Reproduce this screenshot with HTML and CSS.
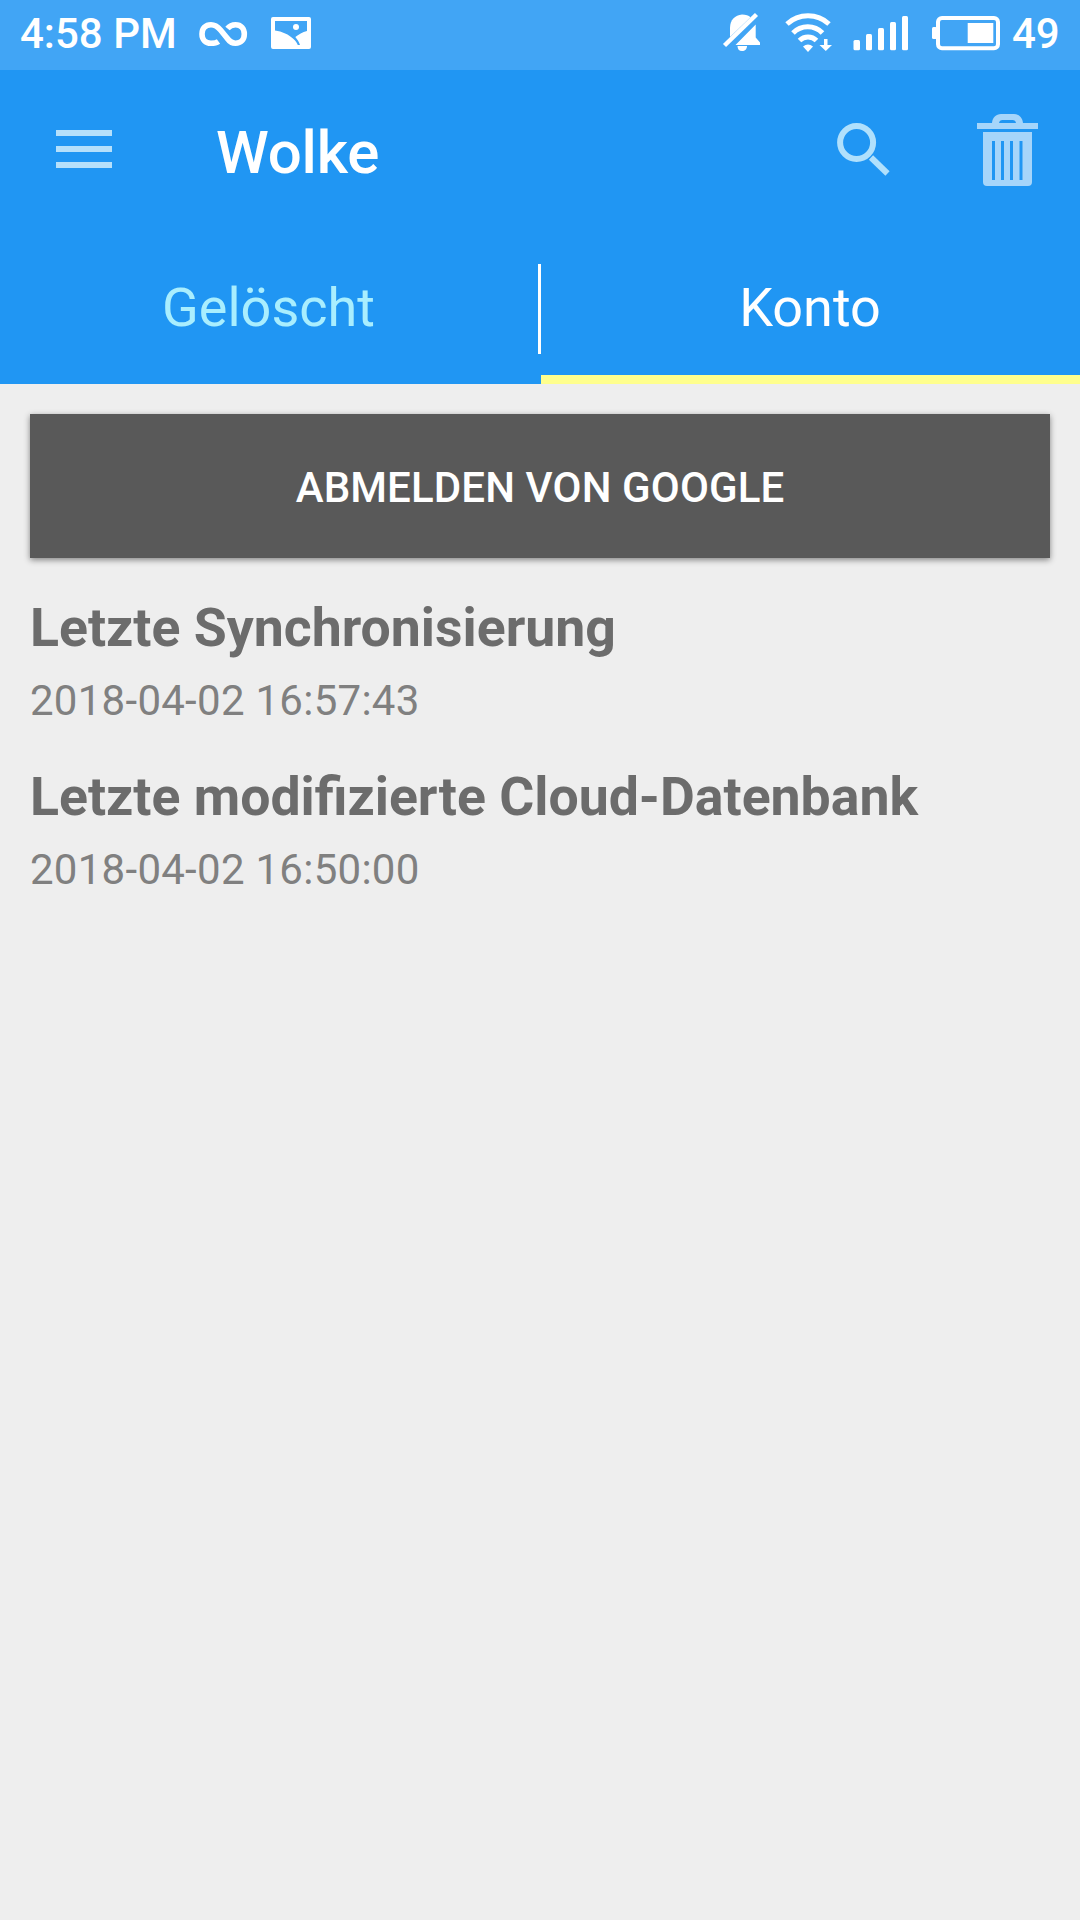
FILE: index.html
```html
<!DOCTYPE html>
<html lang="de">
<head>
	<meta charset="utf-8">
	<title>Wolke</title>
	<link rel="stylesheet" href="styles.css">
</head>
<body>
	<div class="status-bar">
		<span class="clock">4:58 PM</span>
		<svg class="icon-infinity" width="50" height="70" viewBox="198 0 50 70">
			<path d="M218.500 41.500C216 43.300 213.500 43.300 211 43.300C205.500 43.300 202 39.500 202 34S205.500 24.700 211 24.700C215.500 24.700 218 27 220.500 30L227 38C229.500 41.500 232 43.300 235.500 43.300C241 43.300 244.300 39.500 244.300 34S241 24.700 235.500 24.700C232 24.700 229.500 26 227.500 28.500" />
		</svg>
		<svg class="icon-picture" width="40" height="70" viewBox="271 0 40 70">
			<path fill-rule="evenodd" d="M273 17H309Q311 17 311 19V47Q311 49 309 49H273Q271 49 271 47V19Q271 17 273 17ZM275 21V30.500C282 31.500 289 34.500 293.500 39C295.800 41 297 43 297.800 45H300C299 42 297.500 39.500 295.300 37C298.500 34.500 302.500 32 307 31V21Z" />
			<circle cx="296" cy="27" r="3" />
		</svg>
		<div class="status-right">
			<svg width="40" height="70" viewBox="722 0 40 70">
				<path d="M730 37V28C730 20 735 15 742 14.500C746 14.500 748.500 15.500 750.500 17.200Z" />
				<path d="M755.700 24.500V37.500L760 42.500V45H735.500Z" />
				<path d="M737.500 46H747C747 49 745 51 742 51S737.500 49 737.500 46Z" />
				<path class="slash" d="M724.500 45.500L756.500 14.500" />
			</svg>
			<svg class="icon-wifi" width="48" height="70" viewBox="785 0 48 70">
				<path class="arc" d="M787 24A31 31 0 0 1 829 24" />
				<path class="arc" d="M793 33A20.500 20.500 0 0 1 822.500 33" />
				<path class="arc" d="M799.500 40.500A12 12 0 0 1 816.500 40.500" />
				<path d="M803 46.500Q808 42.500 813 46.500L808 52Z" />
				<path d="M824 39H827.500V45H832L825.800 51L819.500 45H824Z" />
			</svg>
			<svg class="icon-signal" width="56" height="70" viewBox="853 0 56 70">
				<rect x="853.500" y="40" width="6.500" height="10.300" rx="1.500" />
				<rect x="866" y="34" width="6" height="16.300" rx="1.500" />
				<rect x="878" y="28" width="6" height="22.300" rx="1.500" />
				<rect x="890" y="22" width="6" height="28.300" rx="1.500" />
				<rect x="902" y="16" width="6" height="34.300" rx="1.500" />
			</svg>
			<svg class="icon-battery" width="70" height="70" viewBox="931 0 70 70">
				<rect class="shell" x="938" y="18" width="60" height="30.300" rx="4" />
				<rect x="932" y="27" width="5" height="12" rx="1.500" />
				<rect x="967.700" y="23" width="25.600" height="20" />
			</svg>
			<span class="battery-level">49</span>
		</div>
	</div>

	<div class="app-bar">
		<svg width="56" height="38" viewBox="0 0 56 38">
			<path d="M0 0H56V6H0ZM0 16H56V22H0ZM0 32H56V38H0Z" />
		</svg>
		<h1>Wolke</h1>
		<svg class="icon-search" width="54" height="54" viewBox="836 122 54 54">
			<circle cx="856.600" cy="142.500" r="16.500" />
			<path d="M871 157.500L887.500 173.500" />
		</svg>
		<svg class="icon-trash" width="61" height="72" viewBox="0 0 61 72">
			<path fill-rule="evenodd" d="M0 9H15C15.500 3.500 19 0 24 0H37C42 0 45.500 3.500 46 9H61V15H0ZM22 9H39Q38.500 6 35.500 6H25.500Q22.500 6 22 9Z" />
			<path fill-rule="evenodd" d="M6 18H55V68Q55 72 51 72H10Q6 72 6 68ZM15 27V66H18V27ZM24 27V66H27V27ZM33 27V66H36V27ZM42.500 27V66H45.500V27Z" />
		</svg>
	</div>

	<div class="tabs">
		<div class="tab">Gelöscht</div>
		<div class="divider"></div>
		<div class="tab active">Konto</div>
	</div>

	<div class="content">
		<button class="logout">ABMELDEN VON GOOGLE</button>
		<div class="entry">
			<h2>Letzte Synchronisierung</h2>
			<p>2018-04-02 16:57:43</p>
		</div>
		<div class="entry">
			<h2>Letzte modifizierte Cloud-Datenbank</h2>
			<p>2018-04-02 16:50:00</p>
		</div>
	</div>
</body>
</html>
```
FILE: styles.css
```css
* {
	box-sizing: border-box;
}
body {
	margin: 0;
	min-height: 1920px;
	background-color: #eeeeee;
	font-family: Roboto, sans-serif;
}
svg {
	display: block;
	flex: none;
}
h1, h2, p {
	margin: 0;
}

/* status bar */
.status-bar {
	display: flex;
	align-items: center;
	height: 70px;
	padding: 0 21px 0 20px;
	background-color: #41a5f5;
	color: #fff;
	font-size: 42px;
	font-weight: 500;
	line-height: 68px;
}
.status-bar svg {
	fill: #fff;
}
.clock {
	width: 178px;
	height: 70px;
	white-space: nowrap;
}
.status-bar .icon-infinity {
	fill: none;
	stroke: #fff;
	stroke-width: 5.6;
}
.icon-picture {
	margin-left: 23px;
}
.status-right {
	display: flex;
	margin-left: auto;
}
.slash {
	stroke: #fff;
	stroke-width: 4.5;
}
.icon-wifi {
	margin-left: 23px;
}
.arc {
	fill: none;
	stroke: #fff;
	stroke-width: 5;
}
.icon-signal {
	margin-left: 20px;
}
.icon-battery {
	margin-left: 22px;
}
.shell {
	fill: none;
	stroke: #fff;
	stroke-width: 4;
}
.battery-level {
	width: 47px;
	margin-left: 11px;
}

/* app bar */
.app-bar {
	display: flex;
	align-items: center;
	height: 164px;
	padding: 0 42px 6px 56px;
	background-color: #2096f3;
}
.app-bar svg {
	fill: #b5e0fb;
}
.app-bar h1 {
	flex: 1;
	margin-left: 104px;
	padding-top: 7px;
	color: #fff;
	font-size: 60px;
	font-weight: 500;
	letter-spacing: -0.2px;
	line-height: 70px;
}
.app-bar .icon-search {
	fill: none;
	stroke: #b0e0fc;
	stroke-width: 6;
}
.app-bar .icon-trash {
	margin: 2px 0 0 87px;
	fill: #a6d5fa;
}

/* tabs */
.tabs {
	display: grid;
	grid-template-columns: 538px 3px 1fr;
	align-items: center;
	height: 150px;
	background-color: #2096f3;
	font-size: 54px;
}
.tab {
	height: 150px;
	padding-right: 1px;
	line-height: 147px;
	text-align: center;
	color: #a9eefe;
}
.divider {
	height: 90px;
	background-color: #fff;
}
.tab.active {
	color: #fff;
	border-bottom: 9px solid #ffff8d;
}

/* account page */
.content {
	padding: 30px;
}
.logout {
	display: block;
	width: 100%;
	height: 144px;
	padding: 2px 0 0;
	border: none;
	background-color: #595959;
	box-shadow: 0 2px 6px rgba(0, 0, 0, 0.45);
	color: #fff;
	font-family: inherit;
	font-size: 42px;
	font-weight: 500;
	letter-spacing: 0.12px;
}
.entry {
	margin-top: 39px;
}
.logout + .entry {
	margin-top: 38px;
}
.entry h2 {
	color: #6c6c6c;
	font-size: 53.6px;
	font-weight: 700;
	line-height: 64px;
}
.entry p {
	margin-top: 16px;
	color: #808080;
	font-size: 42px;
	letter-spacing: 0.27px;
	line-height: 50px;
}
```
